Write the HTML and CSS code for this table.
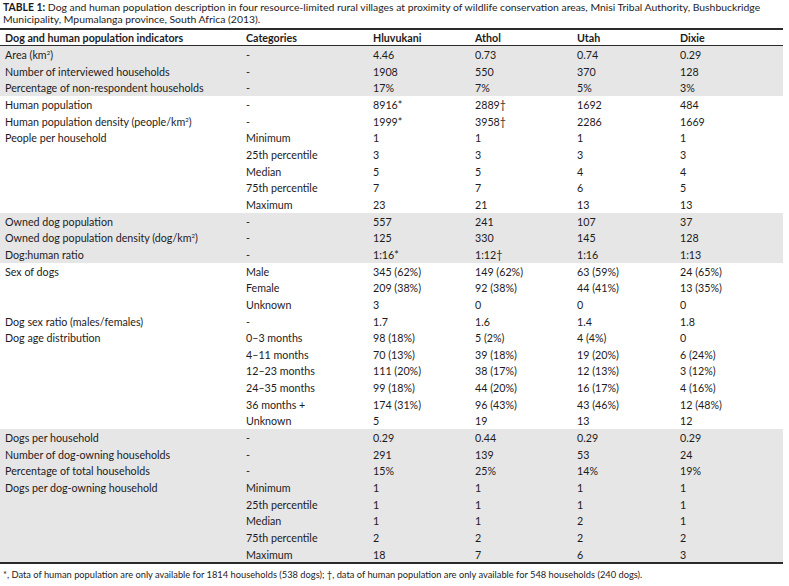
FILE: index.html
```html
<!DOCTYPE html>
<html lang="en">
<head>
<meta charset="utf-8">
<title>Table 1</title>
<link rel="stylesheet" href="styles.css">
</head>
<body>
<div class="page">
  <p class="caption"><b>TABLE 1:</b> Dog and human population description in four resource-limited rural villages at proximity of wildlife conservation areas, Mnisi Tribal Authority, Bushbuckridge<br>Municipality, Mpumalanga province, South Africa (2013).</p>
  <table class="data">
    <colgroup>
      <col class="c1"><col class="c2"><col class="c3"><col class="c4"><col class="c5"><col class="c6">
    </colgroup>
    <thead>
      <tr><th>Dog and human population indicators</th><th>Categories</th><th>Hluvukani</th><th>Athol</th><th>Utah</th><th>Dixie</th></tr>
    </thead>
    <tbody>
      <tr class="shade"><td>Area (km<sup>2</sup>)</td><td>-</td><td>4.46</td><td>0.73</td><td>0.74</td><td>0.29</td></tr>
      <tr class="shade"><td>Number of interviewed households</td><td>-</td><td>1908</td><td>550</td><td>370</td><td>128</td></tr>
      <tr class="shade"><td>Percentage of non-respondent households</td><td>-</td><td>17%</td><td>7%</td><td>5%</td><td>3%</td></tr>
      <tr><td>Human population</td><td>-</td><td>8916*</td><td>2889†</td><td>1692</td><td>484</td></tr>
      <tr><td>Human population density (people/km<sup>2</sup>)</td><td>-</td><td>1999*</td><td>3958†</td><td>2286</td><td>1669</td></tr>
      <tr><td>People per household</td><td>Minimum</td><td>1</td><td>1</td><td>1</td><td>1</td></tr>
      <tr><td></td><td>25th percentile</td><td>3</td><td>3</td><td>3</td><td>3</td></tr>
      <tr><td></td><td>Median</td><td>5</td><td>5</td><td>4</td><td>4</td></tr>
      <tr><td></td><td>75th percentile</td><td>7</td><td>7</td><td>6</td><td>5</td></tr>
      <tr><td></td><td>Maximum</td><td>23</td><td>21</td><td>13</td><td>13</td></tr>
      <tr class="shade"><td>Owned dog population</td><td>-</td><td>557</td><td>241</td><td>107</td><td>37</td></tr>
      <tr class="shade"><td>Owned dog population density (dog/km<sup>2</sup>)</td><td>-</td><td>125</td><td>330</td><td>145</td><td>128</td></tr>
      <tr class="shade"><td>Dog:human ratio</td><td>-</td><td>1:16*</td><td>1:12†</td><td>1:16</td><td>1:13</td></tr>
      <tr><td>Sex of dogs</td><td>Male</td><td>345 (62%)</td><td>149 (62%)</td><td>63 (59%)</td><td>24 (65%)</td></tr>
      <tr><td></td><td>Female</td><td>209 (38%)</td><td>92 (38%)</td><td>44 (41%)</td><td>13 (35%)</td></tr>
      <tr><td></td><td>Unknown</td><td>3</td><td>0</td><td>0</td><td>0</td></tr>
      <tr><td>Dog sex ratio (males/females)</td><td>-</td><td>1.7</td><td>1.6</td><td>1.4</td><td>1.8</td></tr>
      <tr><td>Dog age distribution</td><td>0–3 months</td><td>98 (18%)</td><td>5 (2%)</td><td>4 (4%)</td><td>0</td></tr>
      <tr><td></td><td>4–11 months</td><td>70 (13%)</td><td>39 (18%)</td><td>19 (20%)</td><td>6 (24%)</td></tr>
      <tr><td></td><td>12–23 months</td><td>111 (20%)</td><td>38 (17%)</td><td>12 (13%)</td><td>3 (12%)</td></tr>
      <tr><td></td><td>24–35 months</td><td>99 (18%)</td><td>44 (20%)</td><td>16 (17%)</td><td>4 (16%)</td></tr>
      <tr><td></td><td>36 months +</td><td>174 (31%)</td><td>96 (43%)</td><td>43 (46%)</td><td>12 (48%)</td></tr>
      <tr><td></td><td>Unknown</td><td>5</td><td>19</td><td>13</td><td>12</td></tr>
      <tr class="shade"><td>Dogs per household</td><td>-</td><td>0.29</td><td>0.44</td><td>0.29</td><td>0.29</td></tr>
      <tr class="shade"><td>Number of dog-owning households</td><td>-</td><td>291</td><td>139</td><td>53</td><td>24</td></tr>
      <tr class="shade"><td>Percentage of total households</td><td>-</td><td>15%</td><td>25%</td><td>14%</td><td>19%</td></tr>
      <tr class="shade"><td>Dogs per dog-owning household</td><td>Minimum</td><td>1</td><td>1</td><td>1</td><td>1</td></tr>
      <tr class="shade"><td></td><td>25th percentile</td><td>1</td><td>1</td><td>1</td><td>1</td></tr>
      <tr class="shade"><td></td><td>Median</td><td>1</td><td>1</td><td>2</td><td>1</td></tr>
      <tr class="shade"><td></td><td>75th percentile</td><td>2</td><td>2</td><td>2</td><td>2</td></tr>
      <tr class="shade"><td></td><td>Maximum</td><td>18</td><td>7</td><td>6</td><td>3</td></tr>
    </tbody>
  </table>
  <p class="note">*, Data of human population are only available for 1814 households (538 dogs); †, data of human population are only available for 548 households (240 dogs).</p>
</div>
</body>
</html>
```
FILE: styles.css
```css
html, body {
  margin: 0;
  padding: 0;
  background: #ffffff;
}
body {
  font-family: Lato, "Open Sans", "Liberation Sans", sans-serif;
  color: #1e1b1c;
}
.page {
  width: 789px;
  padding-top: 1px;
}
.caption {
  margin: 0 0 0 3px;
  font-size: 10.4px;
  line-height: 12px;
  height: 27px;
}
.caption b {
  font-weight: 700;
}
.data {
  width: 783px;
  border-collapse: collapse;
  table-layout: fixed;
  font-size: 10.7px;
  border-top: 2px solid #2b2b2b;
  border-bottom: 2px solid #2b2b2b;
}
.c1 { width: 241px; }
.c2 { width: 127px; }
.c3 { width: 102px; }
.c4 { width: 102px; }
.c5 { width: 103px; }
.c6 { width: 108px; }
.data th {
  text-align: left;
  font-weight: 700;
  height: 14px;
  padding: 1px 0 0 5px;
  border-bottom: 1px solid #2b2b2b;
  line-height: 14px;
}
.data td {
  height: 15.65px;
  padding: 1px 0 0 5px;
  line-height: 15.65px;
  white-space: nowrap;
  vertical-align: middle;
}
.data tr.shade td {
  background: #e6e6e6;
}
.data sup {
  font-size: 6px;
  line-height: 0;
  vertical-align: 4px;
}
.note {
  margin: 5px 0 0 3px;
  font-size: 9.3px;
  line-height: 12px;
}
```
